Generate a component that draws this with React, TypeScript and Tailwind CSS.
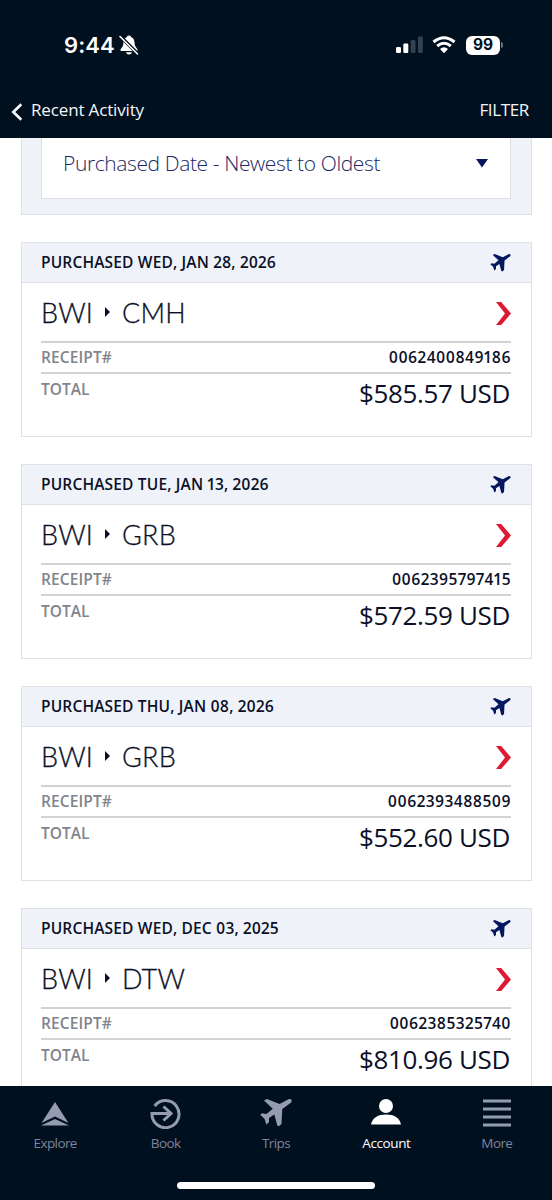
import type { ReactNode } from "react";

interface Purchase {
  date: string;
  from: string;
  to: string;
  receipt: string;
  total: string;
}

const purchases: Purchase[] = [
  { date: "WED, JAN 28, 2026", from: "BWI", to: "CMH", receipt: "0062400849186", total: "$585.57 USD" },
  { date: "TUE, JAN 13, 2026", from: "BWI", to: "GRB", receipt: "0062395797415", total: "$572.59 USD" },
  { date: "THU, JAN 08, 2026", from: "BWI", to: "GRB", receipt: "0062393488509", total: "$552.60 USD" },
  { date: "WED, DEC 03, 2025", from: "BWI", to: "DTW", receipt: "0062385325740", total: "$810.96 USD" },
];

function Plane({ className }: { className: string }) {
  return (
    <svg viewBox="0 0 32 28" className={className} fill="currentColor">
      <path d="M4 1.500L7 0L19.500 5L28.500 0.200Q31 -0.500 31.500 1.200Q32 2.700 30.500 4L22.300 10L21.500 25L19 27.300L17.300 26.500L14.300 15.500L9 19L9 23.300L6.300 25.500L4.500 19.700L0.200 15.800L2 14.200L6.500 15L12.800 9.800Z" />
    </svg>
  );
}

function StatusBar() {
  return (
    <div className="flex h-[84px] items-start justify-between pt-[33px] pr-[49px] pl-[64px] text-white">
      <div className="flex items-center gap-1">
        <span className="w-[51px] whitespace-nowrap font-['Inter',sans-serif] text-[22px] leading-6 font-semibold tracking-[0.1px]">9:44</span>
        <svg viewBox="0 0 20 22" className="h-[22px] w-5" fill="currentColor">
          <path d="M10 1.500C11.500 1.500 12 2.500 12.300 3.300C15 4.200 15.500 7 15.700 10C15.900 12.500 17.500 13.500 18.500 15.500Q19 17 17.500 17H2.500Q1 17 1.500 15.500C2.500 13.500 4.100 12.500 4.300 10C4.500 7 5 4.200 7.700 3.300C8 2.500 8.500 1.500 10 1.500Z" />
          <path d="M7 18.200H13Q12.500 20.500 10 20.500T7 18.200Z" />
          <path d="M1.500 2.500L18.500 19.500" stroke="#00101f" strokeWidth="3.400" />
          <path d="M1 2.500L18.500 20" stroke="currentColor" strokeWidth="1.600" strokeLinecap="round" />
        </svg>
      </div>
      <div className="flex h-6 items-center">
        <svg viewBox="0 0 27 18" className="h-[18px] w-[27px]" fill="currentColor">
          <rect x="0" y="11" width="5" height="6" rx="1.200" />
          <rect x="7.300" y="7.500" width="5" height="9.500" rx="1.200" />
          <rect x="14.700" y="4" width="4.800" height="13" rx="1.200" fill="#334250" />
          <rect x="22" y="0.500" width="4.800" height="16.500" rx="1.200" fill="#334250" />
        </svg>
        <svg viewBox="0 0 24 18" className="ml-[9px] h-[18px] w-6" fill="none" stroke="currentColor" strokeWidth="3">
          <path d="M1.500 6Q12 -2.400 22.500 6" />
          <path d="M5.200 10Q12 4.500 18.800 10" />
          <path d="M8 13Q12 9.600 16 13L12 17.300Z" fill="currentColor" stroke="none" />
        </svg>
        <div className="ml-[10px] flex h-[19px] w-[34px] items-center justify-center rounded-[6px] bg-white font-['Inter',sans-serif] text-[15.500px] font-bold text-[#00101f]">99</div>
        <div className="ml-px h-[6px] w-[2px] rounded-r-full bg-[#65717c]" />
      </div>
    </div>
  );
}

function Header() {
  return (
    <header className="h-[138px] shrink-0 bg-[#00101f] text-[#f4f6f8]">
      <StatusBar />
      <div className="flex h-[52px] items-center justify-between pr-[23px] pl-[11px] font-['Open_Sans',sans-serif] text-[17px]">
        <div className="flex items-center">
          <svg viewBox="0 0 12 18" className="mt-[3px] mr-2 h-[18px] w-3" fill="none" stroke="white" strokeWidth="2.600">
            <path d="M10.300 1.200L2.300 9L10.300 16.800" />
          </svg>
          <span className="tracking-[-0.15px]">Recent Activity</span>
        </div>
        <span className="tracking-[-0.35px]">FILTER</span>
      </div>
    </header>
  );
}

function SortPanel() {
  return (
    <div className="h-[77px] border-x border-b border-[#dfe1e8] bg-[#eff3f8] pr-5 pl-[19px]">
      <div className="flex h-[61px] items-start justify-between border-x border-b border-[#dcdfe6] bg-white pt-[10px] pr-[22px] pl-[21px]">
        <span className="font-['Open_Sans',sans-serif] text-[21px] leading-[30px] font-light tracking-[-0.39px] whitespace-nowrap text-[#1c2766]">
          Purchased Date - Newest to Oldest
        </span>
        <svg viewBox="0 0 12 9" className="mt-[11px] h-[9px] w-3" fill="#05185f">
          <path d="M0 0H12L6 8.500Z" />
        </svg>
      </div>
    </div>
  );
}

function PurchaseCard({ purchase }: { purchase: Purchase }) {
  return (
    <article className="h-[195px] shrink-0 border border-[#dfe1e5] bg-white text-[#0b1028]">
      <div className="flex h-10 items-center justify-between border-b border-[#dfe1e8] bg-[#eff3f9] pr-5 pl-[19px]">
        <span className="font-['Open_Sans',sans-serif] text-[15.500px] font-semibold tracking-[0.16px] proportional-nums">PURCHASED {purchase.date}</span>
        <Plane className="h-[18px] w-[21px] text-[#05185f]" />
      </div>
      <div className="pr-5 pl-[19px]">
        <div className="flex h-[60px] items-center justify-between border-b-2 border-[#d2d3d5]">
          <div className="mt-[2px] flex items-center font-['Lato',sans-serif] text-[27px] font-light tracking-[0.2px] [-webkit-text-stroke:0.3px_#0b1028]">
            <span className="w-[52px]">{purchase.from}</span>
            <svg viewBox="0 0 5 10" className="mr-[12px] mb-[3px] ml-[12px] h-[10px] w-[5px]" fill="currentColor">
              <path d="M0 0L5 5L0 10Z" />
            </svg>
            <span>{purchase.to}</span>
          </div>
          <svg viewBox="0 0 15 23" className="mt-[3px] h-[23px] w-[15px]" fill="#df1834">
            <path d="M0 0H5.200L15 11.500L5.200 23H0L9 11.500Z" />
          </svg>
        </div>
        <div className="flex h-[31px] items-center justify-between border-b-2 border-[#d2d3d5] font-['Open_Sans',sans-serif] text-[15.500px] font-semibold">
          <span className="tracking-[0.1px] text-[#81848c]">RECEIPT#</span>
          <span className="tracking-[0.45px] proportional-nums">{purchase.receipt}</span>
        </div>
        <div className="flex items-start justify-between font-['Open_Sans',sans-serif]">
          <span className="mt-[3px] text-[15.500px] leading-6 font-semibold text-[#81848c]">TOTAL</span>
          <span className="mt-px mr-px text-[26px] leading-9 tracking-[-0.35px]">{purchase.total}</span>
        </div>
      </div>
    </article>
  );
}

function NavItem({ label, active, children }: { label: string; active?: boolean; children: ReactNode }) {
  return (
    <div className={`flex flex-1 flex-col items-center ${active ? "text-white" : "text-[#959bb1]"}`}>
      <div className="flex h-[34px] items-center justify-center">{children}</div>
      <span className={`mt-[3px] font-['Open_Sans',sans-serif] text-[13.500px] leading-5 ${active ? "tracking-[-0.4px] text-white" : "tracking-[-0.6px] text-[#7d849d]"}`}>{label}</span>
    </div>
  );
}

function BottomNav() {
  return (
    <nav className="flex h-[114px] shrink-0 flex-col items-center bg-[#00101f] pt-[10px]">
      <div className="flex h-[86px] w-full">
        <NavItem label="Explore">
          <svg viewBox="0 0 28 24" className="mt-px mr-px h-6 w-7" fill="currentColor">
            <path d="M14 0L27.500 21L14 14.500L0.500 21Z" />
            <path d="M14 17L28 23.500H0Z" />
          </svg>
        </NavItem>
        <NavItem label="Book">
          <svg viewBox="0 0 31 31" className="h-[31px] w-[31px]" fill="none" stroke="currentColor" strokeWidth="3">
            <path d="M4.700 8A13.500 13.500 0 1 1 2 15.500H21" />
            <path d="M13.500 8.500L21 15.500L13.500 22.500" />
          </svg>
        </NavItem>
        <NavItem label="Trips">
          <Plane className="h-[28px] w-8" />
        </NavItem>
        <NavItem label="Account" active>
          <svg viewBox="0 0 30 26" className="-mt-[3px] h-[26px] w-[30px]" fill="currentColor">
            <circle cx="15" cy="7" r="7" />
            <path d="M0 25.500C1.500 18.500 7 15.500 15 15.500S28.500 18.500 30 25.500Z" />
          </svg>
        </NavItem>
        <NavItem label="More">
          <svg viewBox="0 0 28 28" className="h-7 w-7" stroke="currentColor" strokeWidth="3">
            <path d="M0 2H28M0 10H28M0 18H28M0 26H28" />
          </svg>
        </NavItem>
      </div>
      <div className="h-[7px] w-[198px] rounded-full bg-white" />
    </nav>
  );
}

export default function App() {
  return (
    <div className="flex h-[1200px] w-[552px] flex-col overflow-hidden bg-white">
      <Header />
      <main className="min-h-0 flex-1 overflow-hidden pr-5 pl-[21px]">
        <SortPanel />
        <div className="mt-[27px] flex flex-col gap-[27px]">
          {purchases.map((purchase) => (
            <PurchaseCard key={purchase.receipt} purchase={purchase} />
          ))}
        </div>
      </main>
      <BottomNav />
    </div>
  );
}
